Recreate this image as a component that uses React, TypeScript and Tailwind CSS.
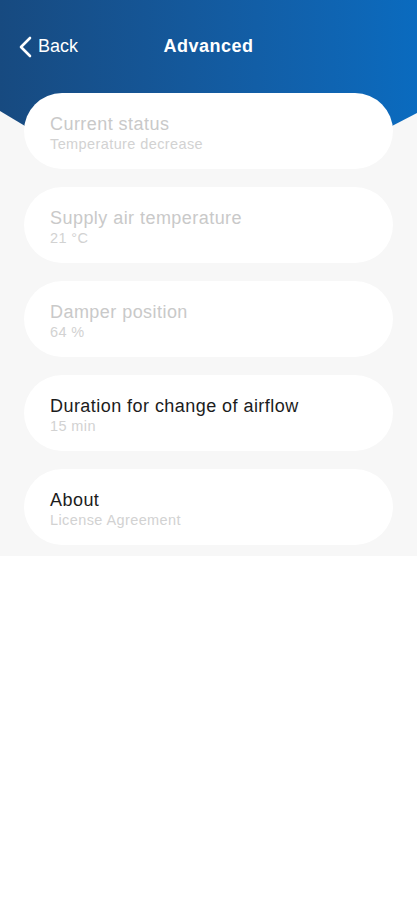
import React from 'react';

type Item = { title: string; value: string; enabled: boolean };

const items: Item[] = [
  { title: 'Current status', value: 'Temperature decrease', enabled: false },
  { title: 'Supply air temperature', value: '21 °C', enabled: false },
  { title: 'Damper position', value: '64 %', enabled: false },
  { title: 'Duration for change of airflow', value: '15 min', enabled: true },
  { title: 'About', value: 'License Agreement', enabled: true },
];

function Row({ item }: { item: Item }) {
  return (
    <div className="relative h-[76px] rounded-full bg-white px-[26px] flex flex-col justify-center pt-[4px]">
      <div className={`text-[18px] leading-[22px] tracking-[0.45px] ${item.enabled ? 'text-[#1c1c1c]' : 'text-[#c9c9c9]'}`}>
        {item.title}
      </div>
      <div className="text-[14.5px] leading-[18px] tracking-[0.4px] text-[#d2d2d2]">{item.value}</div>
    </div>
  );
}

export default function App() {
  return (
    <div className="min-h-[900px] bg-white" style={{ fontFamily: '"Liberation Sans", Arial, sans-serif' }}>
      <div className="bg-[#f7f7f7] pb-[11px]">
        <div className="h-[128px] bg-gradient-to-r from-[#174a80] to-[#0a6bbf] [clip-path:polygon(0_0,100%_0,100%_113px,94%_126px,6%_126px,0_111px)]">
          <div className="relative h-[93px] flex items-center justify-center">
            <div className="absolute left-[18px] top-0 h-full flex items-center gap-[6px] text-white">
              <svg width="14" height="22" viewBox="0 0 14 22" fill="none">
                <path d="M12 2L3 11l9 9" stroke="white" strokeWidth="2.6" strokeLinecap="round" strokeLinejoin="round" />
              </svg>
              <span className="text-[18px]">Back</span>
            </div>
            <span className="text-white text-[18px] font-bold tracking-[0.5px]">Advanced</span>
          </div>
        </div>
        <div className="-mt-[35px] px-[24px] flex flex-col gap-[18px]">
          {items.map((it) => (
            <Row key={it.title} item={it} />
          ))}
        </div>
      </div>
    </div>
  );
}
